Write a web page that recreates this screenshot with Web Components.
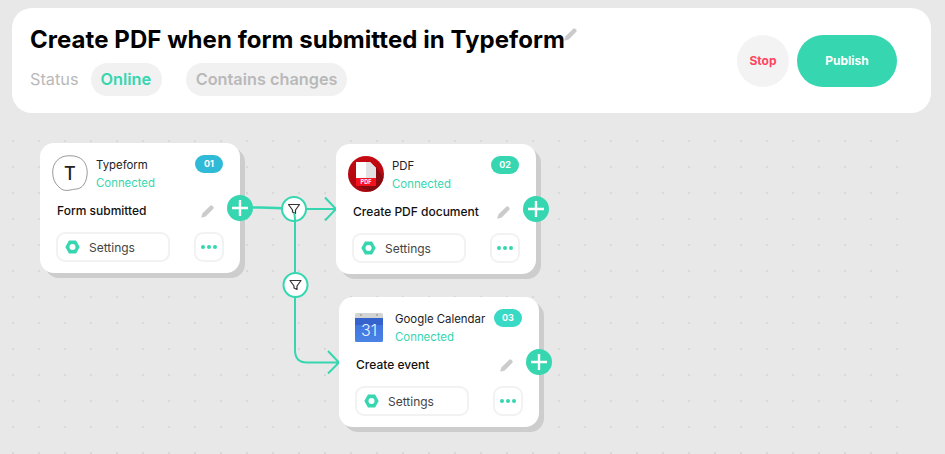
<!DOCTYPE html>
<html>
<head>
<meta charset="utf-8">
<style>
  html, body { margin: 0; height: 100%; }
  body {
    width: 945px; height: 454px; overflow: hidden; position: relative;
    background-color: #e8e8e8;
    font-family: Inter, "Liberation Sans", sans-serif;
    color: #000;
  }
  flow-header { position: relative; z-index: 1; }
</style>
</head>
<body>
<flow-header></flow-header>
<flow-canvas>
  <flow-node style="left:40px;top:143px" num="01" color="#31b9d8" name="Typeform" action="Form submitted" icon="typeform"></flow-node>
  <flow-node style="left:336px;top:144px" num="02" color="#36d6b0" name="PDF" action="Create PDF document" icon="pdf"></flow-node>
  <flow-node style="left:339px;top:297px" num="03" color="#38d9c5" name="Google Calendar" action="Create event" icon="calendar"></flow-node>
</flow-canvas>
<script>
const PENCIL = `<svg width="13" height="13" viewBox="0 0 13 13"><path d="M9 .9a1.800 1.800 0 0 1 2.500 0l.6.6a1.800 1.800 0 0 1 0 2.500L4.700 11.500 1.300 12.600a.7.7 0 0 1-.9-.9L1.500 8.300z" fill="#cbcbcb"/></svg>`;

const ICONS = {
  typeform: `<svg width="38" height="38" viewBox="0 0 38 38">
    <path d="M19 .8C24 .5 30 2.500 33 6c3.500 4 4.500 10 4 15-.5 5-2 9-5 12-3.500 3.500-8 2.800-12 3.800-4 1-8 1-11-1.500C5 32 2 28 1.200 23 .5 19 .5 15 2 11 3.500 7 7 3.500 11 2c2.500-1 5.500-1.100 8-1.200z" fill="#fff" stroke="#777" stroke-width=".8"/>
    <text x="19" y="26" text-anchor="middle" font-family="Inter, 'Liberation Sans', sans-serif" font-size="19" font-weight="500" fill="#222">T</text>
  </svg>`,
  pdf: `<svg width="36" height="36" viewBox="0 0 36 36">
    <defs><linearGradient id="r" x1="0" y1="0" x2="0" y2="1"><stop offset="0" stop-color="#c60a12"/><stop offset="1" stop-color="#a90610"/></linearGradient></defs>
    <circle cx="18" cy="18" r="18" fill="url(#r)"/>
    <path d="M28 11l7.500 10a18 18 0 0 1-13 14.500L10 30h18z" fill="#7c0d12" opacity=".8"/>
    <path d="M8 6h14l6 6v18H8z" fill="#fff"/>
    <path d="M18 6h4l6 6v18H18z" fill="#e2e2e2"/>
    <rect x="8" y="22" width="20" height="8" fill="#f5121d"/>
    <text x="18" y="28.300" text-anchor="middle" font-family="Inter, 'Liberation Sans', sans-serif" font-size="5.500" font-weight="700" fill="#fff">PDF</text>
  </svg>`,
  calendar: `<svg width="28" height="29" viewBox="0 0 28 29">
    <defs><linearGradient id="b" x1="0" y1="0" x2="0" y2="1"><stop offset="0" stop-color="#3d6fdc"/><stop offset="1" stop-color="#4a83e6"/></linearGradient></defs>
    <path d="M1.500 0h25A1.500 1.500 0 0 1 28 1.500V7H0V1.500A1.500 1.500 0 0 1 1.500 0z" fill="#d4d4d4"/>
    <rect x="5" y="1" width="2" height="2" rx="1" fill="#a5a5a5"/>
    <rect x="21" y="1" width="2" height="2" rx="1" fill="#a5a5a5"/>
    <path d="M0 5h28v22.500a1.500 1.500 0 0 1-1.500 1.500h-25A1.500 1.500 0 0 1 0 27.500z" fill="url(#b)"/>
    <rect y="5" width="28" height="7" fill="#3563cd"/>
    <text x="14" y="22.500" text-anchor="middle" font-family="Inter, 'Liberation Sans', sans-serif" font-size="16" font-weight="300" fill="#eef3fc">31</text>
  </svg>`
};

class FlowHeader extends HTMLElement {
  connectedCallback() {
    this.attachShadow({ mode: 'open' });
    this.shadowRoot.innerHTML = `
      <style>
        :host {
          display: flex; justify-content: space-between; align-items: center;
          box-sizing: border-box;
          margin: 8px 14px 0 12px;
          height: 105px;
          padding: 0 34px 2px 18px;
          background: #fff;
          border-radius: 20px;
        }
        .title { display: flex; align-items: flex-start; }
        h1 { margin: 0; font-size: 24px; letter-spacing: .05px; line-height: 32px; font-weight: 700; color: #000; }
        .title svg { margin-top: 4px; margin-left: -1px; }
        .status { display: flex; align-items: center; margin-top: 7px; font-size: 16.300px; font-weight: 600; color: #b9b9b9; }
        .label { font-weight: 400; margin-right: 12px; }
        .pill { background: #f1f1f1; border-radius: 17px; height: 33px; line-height: 33px; padding: 0 10px; }
        .online { color: #36d6b0; margin-right: 24px; padding-right: 10.500px; }
        .btns { display: flex; gap: 8px; margin-bottom: -2px; }
        .btns div { height: 52px; line-height: 52px; border-radius: 26px; font-size: 12px; font-weight: 700; text-align: center; }
        .stop { width: 52px; background: #f3f3f3; color: #ff4560; }
        .pub { width: 100px; background: #36d6b0; color: #fff; }
      </style>
      <div>
        <div class="title"><h1>Create PDF when form submitted in Typeform</h1>${PENCIL}</div>
        <div class="status"><span class="label">Status</span><span class="pill online">Online</span><span class="pill">Contains changes</span></div>
      </div>
      <div class="btns"><div class="stop">Stop</div><div class="pub">Publish</div></div>
    `;
  }
}
customElements.define('flow-header', FlowHeader);

class FlowNode extends HTMLElement {
  connectedCallback() {
    const icon = ICONS[this.getAttribute('icon')];
    this.attachShadow({ mode: 'open' });
    this.shadowRoot.innerHTML = `
      <style>
        :host {
          position: absolute; display: block; box-sizing: border-box;
          width: 200px; height: 130px;
          padding: 12px 16px;
          background: #fff; border-radius: 14px;
          box-shadow: 5px 5px 0 #cdcdcd;
        }
        .top { display: flex; align-items: flex-start; height: 37px; }
        .icon { width: 36px; height: 36px; margin-left: -4px; margin-right: 8px; flex: none; display: flex; align-items: center; justify-content: center; }
        .names { flex: 1; font-size: 11.400px; line-height: 18px; margin-top: 1px; color: #222; white-space: nowrap; }
        .conn { color: #36d6b0; }
        .num { width: 28px; height: 18px; line-height: 18px; border-radius: 9px; background: var(--num); color: #fff; font-size: 9px; font-weight: 700; text-align: center; margin-right: 1px; }
        .action { display: flex; justify-content: space-between; align-items: center; margin-top: 10px; padding: 0 10px 0 1px; font-size: 12px; font-weight: 500; line-height: 18px; color: #111; }
        .bottom { display: flex; justify-content: space-between; margin-top: 12px; }
        .settings { box-sizing: border-box; width: 114px; height: 30px; border: 2px solid #f2f2f2; border-radius: 9px; display: flex; align-items: center; padding-left: 7px; gap: 9px; font-size: 12px; color: #444; }
        .more { box-sizing: border-box; width: 30px; height: 30px; border: 2px solid #f2f2f2; border-radius: 9px; display: flex; align-items: center; justify-content: center; gap: 2px; }
        .more i { width: 4px; height: 4px; border-radius: 50%; background: #36d6b0; }
        .plus { position: absolute; right: -13px; top: 52px; width: 26px; height: 26px; border-radius: 50%; background: #36d6b0; }
        .plus svg { display: block; }
      </style>
      <div class="top">
        <div class="icon">${icon}</div>
        <div class="names"><div>${this.getAttribute('name')}</div><div class="conn">Connected</div></div>
        <div class="num" style="--num:${this.getAttribute('color')}">${this.getAttribute('num')}</div>
      </div>
      <div class="action"><span>${this.getAttribute('action')}</span>${PENCIL}</div>
      <div class="bottom">
        <div class="settings"><svg width="15" height="14" viewBox="0 0 15 14"><path d="M4 .5h7L14.700 7 11 13.500H4L.3 7z" fill="#36d6b0"/><circle cx="7.500" cy="7" r="3" fill="#fff"/></svg>Settings</div>
        <div class="more"><i></i><i></i><i></i></div>
      </div>
      <div class="plus"><svg width="26" height="26" viewBox="0 0 26 26"><path d="M13 5v16M5 13h16" stroke="#fff" stroke-width="2.400"/></svg></div>
    `;
  }
}
customElements.define('flow-node', FlowNode);

class FlowCanvas extends HTMLElement {
  connectedCallback() {
    const root = this.attachShadow({ mode: 'open' });
    const funnel = `<path d="M-5.500-4.500h11L1.500 1V4.500L-1.500 3V1z" fill="#fff" stroke="#333" stroke-width="1.200" stroke-linejoin="round"/>`;
    root.innerHTML = `
      <style>
        :host { display: block; position: absolute; inset: 0; }
        svg { position: absolute; left: 0; top: 0; }
      </style>
      <svg width="945" height="454" viewBox="0 0 945 454" fill="none">
        <defs><pattern id="d" x="12" y="10" width="26" height="26" patternUnits="userSpaceOnUse"><rect width="2" height="2" fill="#d8d8d8"/></pattern></defs>
        <rect y="130" width="905" height="324" fill="url(#d)"/>
        <path d="M252 207.500C270 207 283 208 295 209" stroke="#36d6b0" stroke-width="2.500"/>
        <path d="M305 209h30M325 197.500L336 209 325 220.500" stroke="#36d6b0" stroke-width="2"/>
        <path d="M295 215v135c0 8 4 12.500 12 12.500h31M328 351l11 11.500-11 11" stroke="#36d6b0" stroke-width="2"/>
        <circle cx="294" cy="209" r="12" fill="#fff" stroke="#36d6b0" stroke-width="2"/>
        <g transform="translate(294 209)">${funnel}</g>
        <path d="M294 213c1 2 1 5 1 9" stroke="#36d6b0" stroke-width="2"/>
        <circle cx="295.500" cy="285" r="12" fill="#fff" stroke="#36d6b0" stroke-width="2"/>
        <g transform="translate(295.500 285)">${funnel}</g>
      </svg>
      <slot></slot>
    `;
  }
}
customElements.define('flow-canvas', FlowCanvas);
</script>
</body>
</html>
